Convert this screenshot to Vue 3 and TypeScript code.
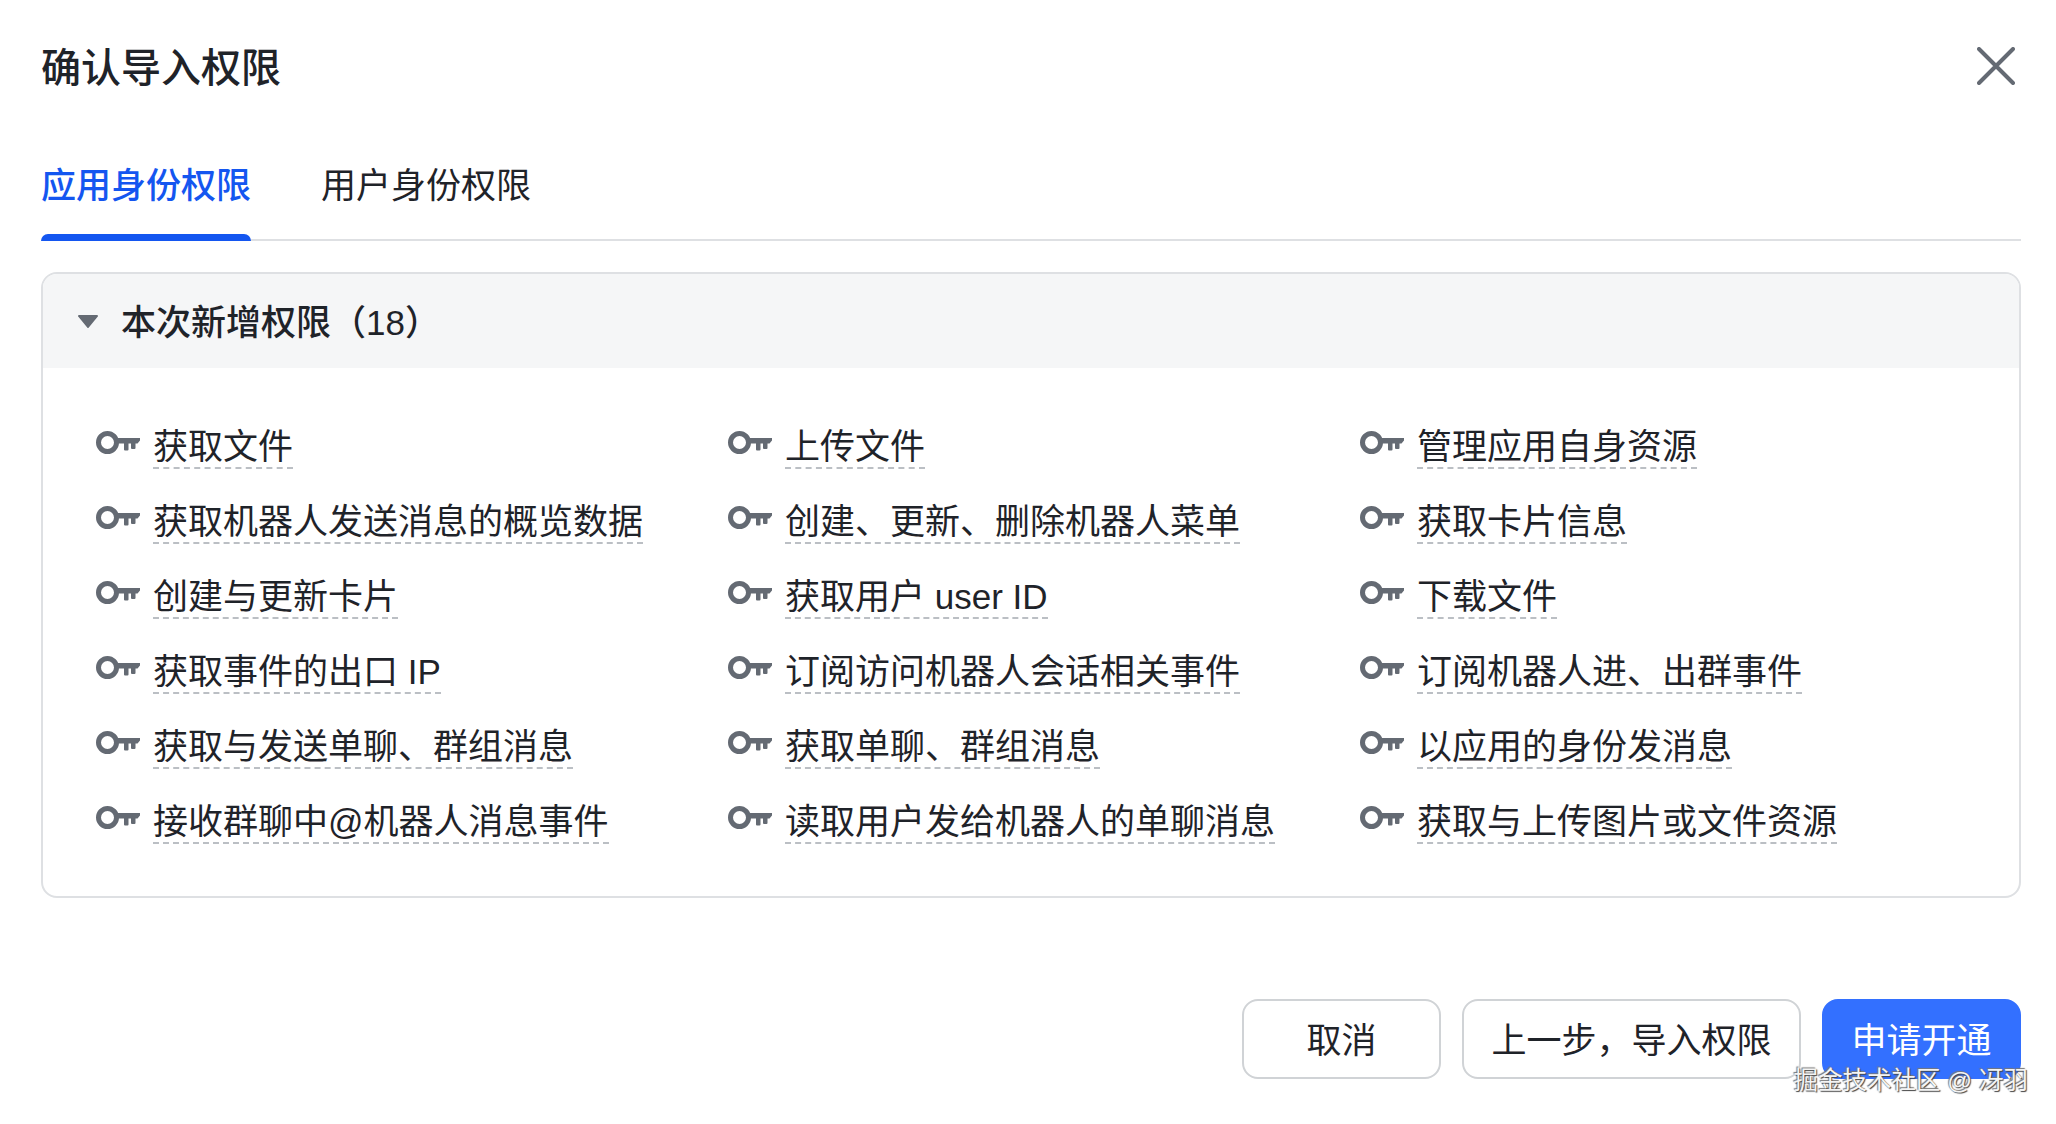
<script setup lang="ts">
const items: string[] = [
  '获取文件', '上传文件', '管理应用自身资源',
  '获取机器人发送消息的概览数据', '创建、更新、删除机器人菜单', '获取卡片信息',
  '创建与更新卡片', '获取用户 user ID', '下载文件',
  '获取事件的出口 IP', '订阅访问机器人会话相关事件', '订阅机器人进、出群事件',
  '获取与发送单聊、群组消息', '获取单聊、群组消息', '以应用的身份发消息',
  '接收群聊中@机器人消息事件', '读取用户发给机器人的单聊消息', '获取与上传图片或文件资源'
]
</script>

<template>
  <div class="dialog">
    <header class="head">
      <h1 class="title">确认导入权限</h1>
      <svg class="close" width="38" height="38" viewBox="0 0 38 38" fill="none" stroke="#646a73" stroke-width="4" stroke-linecap="round">
        <path d="M2 2 36 36M36 2 2 36" />
      </svg>
    </header>
    <nav class="tabs">
      <div class="tab active">应用身份权限</div>
      <div class="tab">用户身份权限</div>
    </nav>
    <section class="panel">
      <div class="panel-head">
        <svg class="caret" width="20" height="13" viewBox="0 0 20 13" fill="#646a73"><path d="M1 0h18a1 1 0 0 1 .8 1.6l-9 11a1 1 0 0 1-1.600 0l-9-11A1 1 0 0 1 1 0z" /></svg>
        <span class="head-text">本次新增权限（18）</span>
      </div>
      <div class="grid">
        <div v-for="item in items" :key="item" class="item">
          <svg class="key" width="44" height="23" viewBox="0 0 44 23" fill="#646a73">
            <circle cx="11.500" cy="11.500" r="9" fill="none" stroke="#646a73" stroke-width="5" />
            <path d="M20 7h24v2.500l-2.500 3h-2v4.500a1 1 0 0 1-1 1h-2.500a1 1 0 0 1-1-1v-4.500h-2.500v6a1 1 0 0 1-1 1h-2.500a1 1 0 0 1-1-1v-6h-8z" />
          </svg>
          <span class="label">{{ item }}</span>
        </div>
      </div>
    </section>
    <footer class="foot">
      <button class="btn">取消</button>
      <button class="btn">上一步，导入权限</button>
      <button class="btn primary">申请开通</button>
    </footer>
    <div class="mark">掘金技术社区 @ 冴羽</div>
  </div>
</template>

<style>
html, body { margin: 0; background: #fff; }
</style>

<style scoped>
.dialog {
  position: relative;
  box-sizing: border-box;
  width: 2056px;
  height: 1124px;
  padding: 0 35px 0 41px;
  color: #1f2329;
  font-family: "Liberation Sans", "Noto Sans CJK SC", sans-serif;
  background: #fff;
  overflow: hidden;
}
.head {
  display: flex;
  align-items: center;
  justify-content: space-between;
  height: 132px;
}
.title { margin: 3px 0 0; font-size: 40px; line-height: 56px; font-weight: 500; }
.close { margin-right: 6px; }
.tabs {
  display: flex;
  gap: 70px;
  height: 109px;
  box-sizing: border-box;
  border-bottom: 2px solid #dee0e3;
}
.tab {
  position: relative;
  font-size: 35px;
  line-height: 50px;
  padding-top: 29px;
}
.tab.active { color: #1456f0; font-weight: 500; }
.tab.active::after {
  content: "";
  position: absolute;
  left: 0;
  right: 0;
  bottom: -2px;
  height: 7px;
  background: #1456f0;
  border-radius: 7px 7px 0 0;
}
.panel {
  margin-top: 31px;
  border: 2px solid #dee0e3;
  border-radius: 16px;
  overflow: hidden;
}
.panel-head {
  display: flex;
  align-items: center;
  height: 94px;
  background: #f5f6f7;
  padding-left: 35px;
  font-size: 35px;
  font-weight: 500;
}
.head-text { margin-bottom: 3px; margin-left: -1px; }
.caret { margin-right: 24px; }
.grid {
  display: grid;
  grid-template-columns: repeat(3, 632px);
  grid-auto-rows: 75px;
  padding: 40px 0 38px 53px;
}
.item { display: flex; align-items: center; }
.key { margin-right: 13px; margin-top: -7px; }
.label {
  font-size: 35px;
  line-height: 40px;
  padding-top: 6px;
  margin-top: -2px;
  border-bottom: 2px dashed #bbbfc4;
}
.foot {
  display: flex;
  justify-content: flex-end;
  gap: 21px;
  margin-top: 101px;
}
.btn {
  box-sizing: border-box;
  height: 80px;
  width: 199px;
  padding: 0 0 4px;
  border: 2px solid #d0d3d6;
  border-radius: 16px;
  background: #fff;
  color: #1f2329;
  font-family: inherit;
  font-size: 35px;
}
.btn:nth-child(2) { width: 339px; }
.btn.primary { background: #3370ff; border-color: #3370ff; color: #fff; }
.mark {
  position: absolute;
  right: 28px;
  top: 1064px;
  font-size: 24.500px;
  line-height: 34px;
  color: #f4f4f4;
  text-shadow: 1px 1px 1px #444, -1px -1px 1px #777;
}
</style>
